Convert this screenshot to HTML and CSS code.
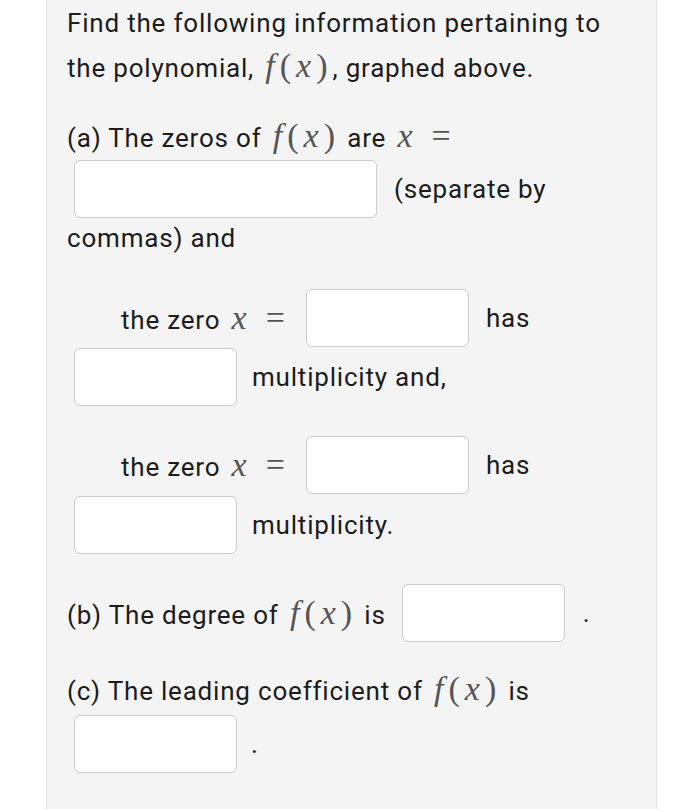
FILE: index.html
```html
<!DOCTYPE html>
<html>
<head>
<meta charset="utf-8">
<link rel="stylesheet" href="styles.css">
</head>
<body>
<div class="panel">
  <p class="intro">Find the following information pertaining to<br>the polynomial, <span class="m"><i>f</i><span class="p">(</span><i>x</i><span class="p">)</span></span>, graphed above.</p>

  <p class="line q-a">(a) The zeros of <span class="m"><i>f</i><span class="p">(</span><i>x</i><span class="p">)</span></span> are <span class="m"><i>x</i><span class="eq">=</span></span></p>
  <div class="row r-first">
    <span class="box wide"></span>
    <span class="after">(separate by</span>
  </div>
  <p class="line commas">commas) and</p>

  <div class="row zero r-zero1">
    <span>the zero <span class="m"><i>x</i><span class="eq">=</span></span></span>
    <span class="box mid"></span>
    <span class="after">has</span>
  </div>
  <div class="row r-mult">
    <span class="box"></span>
    <span class="after2">multiplicity and,</span>
  </div>

  <div class="row zero r-zero2">
    <span>the zero <span class="m"><i>x</i><span class="eq">=</span></span></span>
    <span class="box mid"></span>
    <span class="after">has</span>
  </div>
  <div class="row r-mult2">
    <span class="box"></span>
    <span class="after2">multiplicity.</span>
  </div>

  <div class="row r-b">
    <span>(b) The degree of <span class="m"><i>f</i><span class="p">(</span><i>x</i><span class="p">)</span></span> is</span>
    <span class="box mid"></span>
    <span class="dot">.</span>
  </div>

  <p class="line q-c">(c) The leading coefficient of <span class="m"><i>f</i><span class="p">(</span><i>x</i><span class="p">)</span></span> is</p>
  <div class="row r-c">
    <span class="box"></span>
    <span class="dot2">.</span>
  </div>
</div>
</body>
</html>
```

FILE: styles.css
```css
html, body {
  margin: 0;
  padding: 0;
  background: #ffffff;
}
body {
  font-family: Roboto, "Liberation Sans", sans-serif;
  font-size: 26px;
  letter-spacing: 0.8px;
  color: #1c1c1c;
}
.panel {
  margin-left: 46px;
  width: 611px;
  min-height: 809px;
  box-sizing: border-box;
  background: #f4f4f4;
  border-left: 1px solid #e2e2e2;
  border-right: 1px solid #e2e2e2;
  padding: 1px 10px 0 20px;
}
p {
  margin: 0;
}
.intro {
  line-height: 45px;
  white-space: nowrap;
}
.line {
  line-height: 43px;
  white-space: nowrap;
}
.m {
  font-family: "Liberation Serif", "DejaVu Serif", serif;
  font-size: 34px;
  line-height: 1;
  letter-spacing: 0;
  color: #555555;
}
.m i {
  font-style: italic;
}
.m i:first-child {
  margin-left: 4px;
}
.m .p {
  padding: 0 5px;
}
.m .eq {
  margin-left: 19px;
  margin-right: 2px;
  font-style: normal;
}
.q-a {
  margin-top: 26px;
}
.row {
  display: flex;
  align-items: center;
  white-space: nowrap;
}
.box {
  display: block;
  width: 163px;
  height: 58px;
  box-sizing: border-box;
  background: #ffffff;
  border: 1.5px solid #cbcbcb;
  border-radius: 6px;
  margin-left: 7px;
  flex: none;
}
.box.wide {
  width: 303px;
}
.zero {
  padding-left: 54px;
}
.zero .box {
  margin-left: 19px;
}
.r-b .box {
  margin-left: 16px;
}
.after {
  margin-left: 17px;
}
.after2 {
  margin-left: 15px;
}
.dot {
  margin-left: 18px;
}
.dot2 {
  margin-left: 14px;
}
.commas {
  line-height: 40px;
}
.r-zero1 { margin-top: 31px; }
.r-mult { margin-top: 1px; }
.r-zero2 { margin-top: 30px; }
.r-mult2 { margin-top: 2px; }
.r-b { margin-top: 30px; }
.q-c { margin-top: 27px; line-height: 45px; }
.r-c { margin-top: 1px; }
```
